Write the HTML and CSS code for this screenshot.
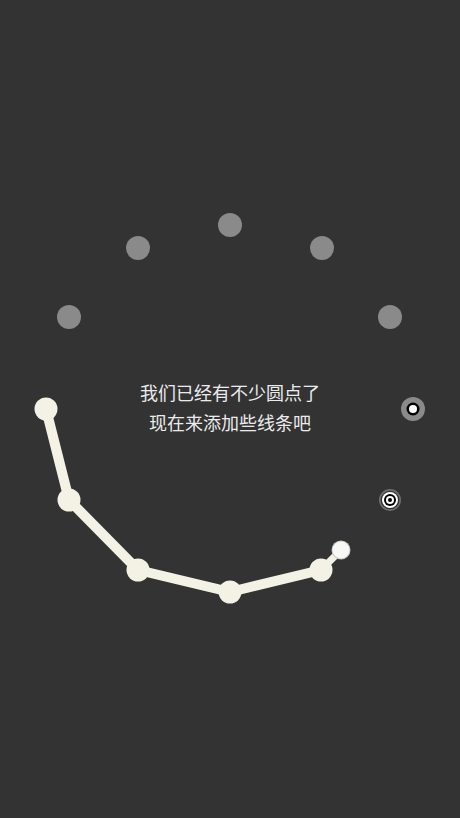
FILE: index.html
```html
<!DOCTYPE html>
<html lang="zh">
<head>
<meta charset="utf-8">
<link rel="stylesheet" href="styles.css">
</head>
<body>
<div class="stage">
  <svg class="board" width="460" height="818" viewBox="0 0 460 818">
    <g class="grey">
      <circle cx="230" cy="225" r="12"/>
      <circle cx="322" cy="248" r="12"/>
      <circle cx="390" cy="317" r="12"/>
      <circle cx="69" cy="317" r="12"/>
      <circle cx="138" cy="248" r="12"/>
    </g>
    <g class="target-a">
      <circle cx="413" cy="409" r="12" fill="#8a8a8a"/>
      <circle cx="413" cy="409" r="6.5" fill="#000"/>
      <circle cx="413" cy="409" r="4" fill="#fff"/>
    </g>
    <g class="target-b">
      <circle cx="390" cy="500" r="11" fill="#6e6e6e"/>
      <circle cx="390" cy="500" r="9.3" fill="#333"/>
      <circle cx="390" cy="500" r="8" fill="#fff"/>
      <circle cx="390" cy="500" r="6" fill="#000"/>
      <circle cx="390" cy="500" r="4" fill="#fff"/>
      <circle cx="390" cy="500" r="2" fill="#000"/>
    </g>
    <polyline class="line" points="46,409 69,500 138,570 230,592 321,570"/>
    <line class="line thin" x1="321" y1="570" x2="341" y2="550"/>
    <g class="cream">
      <circle cx="46" cy="409" r="11.5"/>
      <circle cx="69" cy="500" r="11.5"/>
      <circle cx="138" cy="570" r="11.5"/>
      <circle cx="230" cy="592" r="11.5"/>
      <circle cx="321" cy="570" r="11.5"/>
    </g>
    <circle class="handle-halo" cx="341" cy="550" r="9.5"/>
    <circle class="handle" cx="341" cy="550" r="8.5"/>
  </svg>
  <div class="message">
    <p>我们已经有不少圆点了</p>
    <p>现在来添加些线条吧</p>
  </div>
</div>
</body>
</html>
```
FILE: styles.css
```css
html, body {
  margin: 0;
  padding: 0;
  background: #333333;
}
.stage {
  position: relative;
  width: 460px;
  height: 818px;
  overflow: hidden;
  background: #333333;
}
.board {
  position: absolute;
  left: 0;
  top: 0;
}
.grey circle {
  fill: #8a8a8a;
}
.line {
  fill: none;
  stroke: #f4f2e4;
  stroke-width: 10;
  stroke-linejoin: round;
  stroke-linecap: round;
}
.line.thin {
  stroke-width: 7;
}
.cream circle {
  fill: #f4f2e4;
}
.handle-halo {
  fill: #c9c9c4;
}
.handle {
  fill: #f8f8f4;
}
.message {
  position: relative;
  padding-top: 377px;
  text-align: center;
  color: #ebebeb;
  font-family: "Noto Sans CJK SC", "Noto Sans", sans-serif;
  font-size: 18px;
  line-height: 30px;
}
.message p {
  margin: 0;
}
```
